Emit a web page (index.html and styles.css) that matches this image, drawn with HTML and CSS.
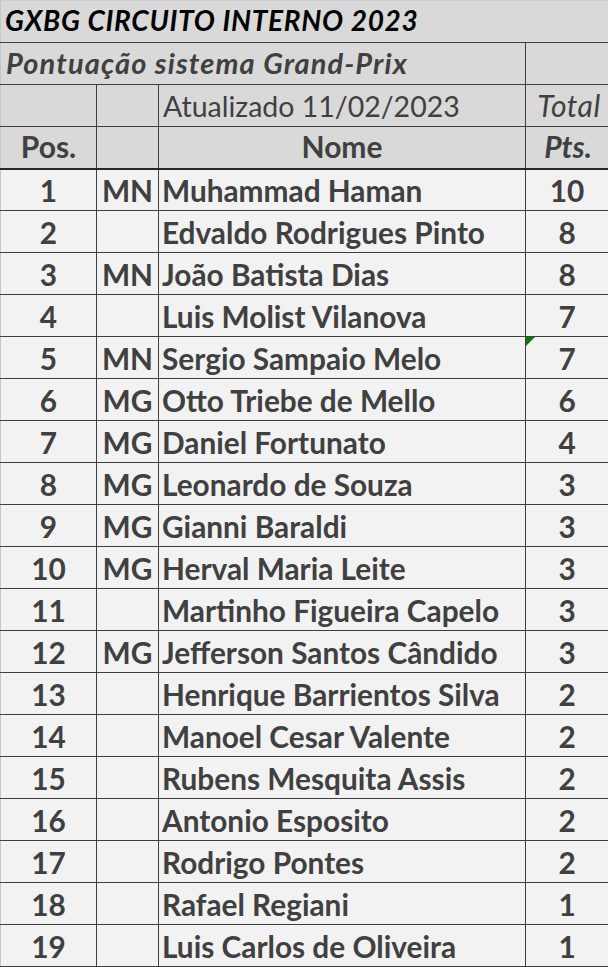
FILE: index.html
```html
<!DOCTYPE html>
<html lang="pt">
<head>
<meta charset="utf-8">
<title>GXBG Circuito Interno 2023</title>
<link rel="stylesheet" href="styles.css">
</head>
<body>
<table class="sheet">
  <colgroup>
    <col class="c-pos">
    <col class="c-tag">
    <col class="c-name">
    <col class="c-pts">
  </colgroup>
  <thead>
    <tr class="r-title"><th colspan="4" class="title">GXBG CIRCUITO INTERNO 2023</th></tr>
    <tr class="r-sub"><th colspan="3" class="subtitle">Pontuação sistema Grand-Prix</th><th class="blank"></th></tr>
    <tr class="r-upd"><th class="blank first"></th><th class="blank"></th><th class="updated">Atualizado 11/02/2023</th><th class="total">Total</th></tr>
    <tr class="r-head"><th class="first hcell">Pos.</th><th class="hcell"></th><th class="hcell">Nome</th><th class="hcell pts-h">Pts.</th></tr>
  </thead>
  <tbody>
    <tr><td class="pos">1</td><td class="tag">MN</td><td class="name">Muhammad Haman</td><td class="pts">10</td></tr>
    <tr><td class="pos">2</td><td class="tag"></td><td class="name">Edvaldo Rodrigues Pinto</td><td class="pts">8</td></tr>
    <tr><td class="pos">3</td><td class="tag">MN</td><td class="name">João Batista Dias</td><td class="pts">8</td></tr>
    <tr><td class="pos">4</td><td class="tag"></td><td class="name">Luis Molist Vilanova</td><td class="pts">7</td></tr>
    <tr><td class="pos">5</td><td class="tag">MN</td><td class="name">Sergio Sampaio Melo</td><td class="pts marked"><span class="flag"></span>7</td></tr>
    <tr><td class="pos">6</td><td class="tag">MG</td><td class="name">Otto Triebe de Mello</td><td class="pts">6</td></tr>
    <tr><td class="pos">7</td><td class="tag">MG</td><td class="name">Daniel Fortunato</td><td class="pts">4</td></tr>
    <tr><td class="pos">8</td><td class="tag">MG</td><td class="name">Leonardo de Souza</td><td class="pts">3</td></tr>
    <tr><td class="pos">9</td><td class="tag">MG</td><td class="name">Gianni Baraldi</td><td class="pts">3</td></tr>
    <tr><td class="pos">10</td><td class="tag">MG</td><td class="name">Herval Maria Leite</td><td class="pts">3</td></tr>
    <tr><td class="pos">11</td><td class="tag"></td><td class="name">Martinho Figueira Capelo</td><td class="pts">3</td></tr>
    <tr><td class="pos">12</td><td class="tag">MG</td><td class="name">Jefferson Santos Cândido</td><td class="pts">3</td></tr>
    <tr><td class="pos">13</td><td class="tag"></td><td class="name">Henrique Barrientos Silva</td><td class="pts">2</td></tr>
    <tr><td class="pos">14</td><td class="tag"></td><td class="name">Manoel Cesar Valente</td><td class="pts">2</td></tr>
    <tr><td class="pos">15</td><td class="tag"></td><td class="name">Rubens Mesquita Assis</td><td class="pts">2</td></tr>
    <tr><td class="pos">16</td><td class="tag"></td><td class="name">Antonio Esposito</td><td class="pts">2</td></tr>
    <tr><td class="pos">17</td><td class="tag"></td><td class="name">Rodrigo Pontes</td><td class="pts">2</td></tr>
    <tr><td class="pos">18</td><td class="tag"></td><td class="name">Rafael Regiani</td><td class="pts">1</td></tr>
    <tr><td class="pos">19</td><td class="tag"></td><td class="name">Luis Carlos de Oliveira</td><td class="pts">1</td></tr>
  </tbody>
</table>
</body>
</html>
```

FILE: styles.css
```css
html, body {
  margin: 0;
  padding: 0;
  background: #ffffff;
}

.sheet {
  border-collapse: collapse;
  table-layout: fixed;
  width: 608px;
  font-family: Lato, "Open Sans", sans-serif;
  color: #404040;
}

.c-pos { width: 96px; }
.c-tag { width: 62px; }
.c-name { width: 367px; }
.c-pts { width: 83px; }

.sheet tr { height: 42px; }

.sheet th,
.sheet td {
  padding: 0 0 1px 0;
  vertical-align: bottom;
  border: 1px solid #3f3f3f;
  white-space: nowrap;
  overflow: visible;
  line-height: 1.2;
}

.sheet thead th {
  background: #d9d9d9;
  font-weight: 700;
}

.sheet .r-title th {
  border-top: 1px solid #cfcfcf;
  border-left: 1px solid #c6c6c6;
  border-right: 1px solid #d9d9d9;
}

.sheet .title {
  text-align: left;
  padding: 0 0 4px 4px;
  font-size: 28px;
  letter-spacing: 0.7px;
  font-style: italic;
  font-weight: 700;
  color: #000000;
}

.sheet .subtitle {
  text-align: left;
  padding: 0 0 3px 5px;
  font-size: 29px;
  letter-spacing: 1.1px;
  font-style: italic;
  font-weight: 700;
}

.sheet .first,
.sheet .subtitle,
.sheet .pos {
  border-left-color: #c6c6c6;
}

.sheet .updated {
  text-align: left;
  padding: 0 0 3px 4px;
  font-size: 28.5px;
  font-weight: 400;
}

.sheet .total {
  text-align: center;
  padding: 0 0 3px 4px;
  font-size: 30px;
  letter-spacing: 0.5px;
  font-style: italic;
  font-weight: 400;
}

.sheet .hcell {
  text-align: center;
  padding: 0 0 4px 0;
  font-size: 30px;
}

.sheet .pts-h {
  font-style: italic;
  padding-left: 2px;
}

.sheet .r-head th {
  border-bottom: 2px solid #262626;
}

.sheet tbody td {
  background: #f2f2f2;
  font-weight: 700;
  font-size: 29.8px;
}

.sheet .pos,
.sheet .tag,
.sheet .pts {
  text-align: center;
}

.sheet .name {
  text-align: left;
  padding-left: 3px;
}

.sheet .marked {
  position: relative;
}

.flag {
  position: absolute;
  left: 0;
  top: 0;
  width: 0;
  height: 0;
  border-top: 9px solid #0a7a0a;
  border-right: 9px solid transparent;
}
```
